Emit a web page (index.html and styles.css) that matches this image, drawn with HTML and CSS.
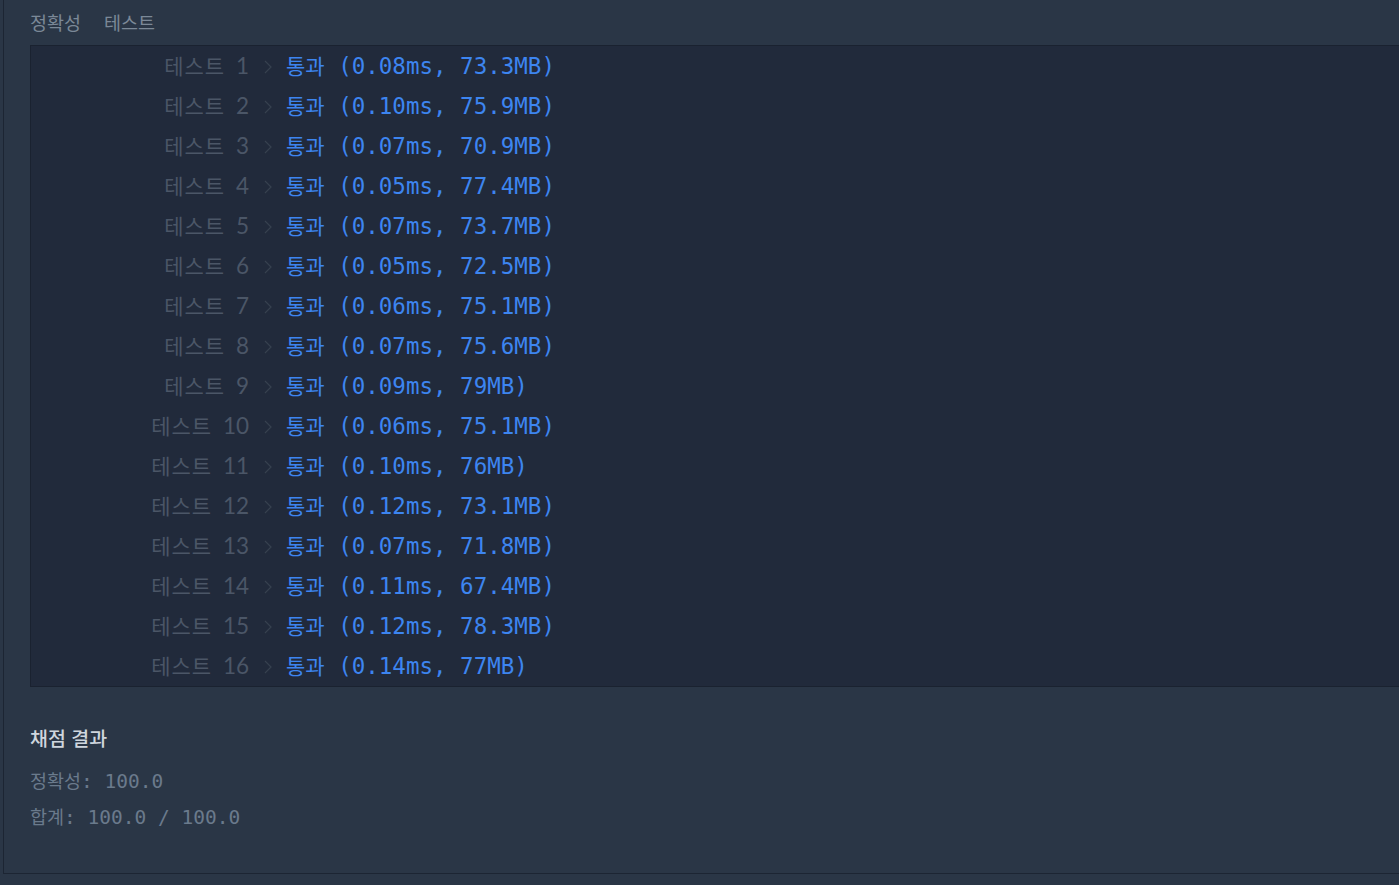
FILE: index.html
```html
<!DOCTYPE html>
<html lang="ko">
<head>
<meta charset="utf-8">
<title>채점 결과</title>
<link rel="stylesheet" href="styles.css">
</head>
<body>
<div class="frame">
  <div class="tabs">
    <span class="tab">정확성</span>
    <span class="tab">테스트</span>
  </div>
  <div class="panel">
    <div class="row"><span class="label"><span class="ko">테스트</span> 1</span><svg class="chev" viewBox="0 0 8 14"><path d="M1 1 L7 7 L1 13"/></svg><span class="result"><span class="ko">통과</span> (0.08ms, 73.3MB)</span></div>
    <div class="row"><span class="label"><span class="ko">테스트</span> 2</span><svg class="chev" viewBox="0 0 8 14"><path d="M1 1 L7 7 L1 13"/></svg><span class="result"><span class="ko">통과</span> (0.10ms, 75.9MB)</span></div>
    <div class="row"><span class="label"><span class="ko">테스트</span> 3</span><svg class="chev" viewBox="0 0 8 14"><path d="M1 1 L7 7 L1 13"/></svg><span class="result"><span class="ko">통과</span> (0.07ms, 70.9MB)</span></div>
    <div class="row"><span class="label"><span class="ko">테스트</span> 4</span><svg class="chev" viewBox="0 0 8 14"><path d="M1 1 L7 7 L1 13"/></svg><span class="result"><span class="ko">통과</span> (0.05ms, 77.4MB)</span></div>
    <div class="row"><span class="label"><span class="ko">테스트</span> 5</span><svg class="chev" viewBox="0 0 8 14"><path d="M1 1 L7 7 L1 13"/></svg><span class="result"><span class="ko">통과</span> (0.07ms, 73.7MB)</span></div>
    <div class="row"><span class="label"><span class="ko">테스트</span> 6</span><svg class="chev" viewBox="0 0 8 14"><path d="M1 1 L7 7 L1 13"/></svg><span class="result"><span class="ko">통과</span> (0.05ms, 72.5MB)</span></div>
    <div class="row"><span class="label"><span class="ko">테스트</span> 7</span><svg class="chev" viewBox="0 0 8 14"><path d="M1 1 L7 7 L1 13"/></svg><span class="result"><span class="ko">통과</span> (0.06ms, 75.1MB)</span></div>
    <div class="row"><span class="label"><span class="ko">테스트</span> 8</span><svg class="chev" viewBox="0 0 8 14"><path d="M1 1 L7 7 L1 13"/></svg><span class="result"><span class="ko">통과</span> (0.07ms, 75.6MB)</span></div>
    <div class="row"><span class="label"><span class="ko">테스트</span> 9</span><svg class="chev" viewBox="0 0 8 14"><path d="M1 1 L7 7 L1 13"/></svg><span class="result"><span class="ko">통과</span> (0.09ms, 79MB)</span></div>
    <div class="row"><span class="label"><span class="ko">테스트</span> 10</span><svg class="chev" viewBox="0 0 8 14"><path d="M1 1 L7 7 L1 13"/></svg><span class="result"><span class="ko">통과</span> (0.06ms, 75.1MB)</span></div>
    <div class="row"><span class="label"><span class="ko">테스트</span> 11</span><svg class="chev" viewBox="0 0 8 14"><path d="M1 1 L7 7 L1 13"/></svg><span class="result"><span class="ko">통과</span> (0.10ms, 76MB)</span></div>
    <div class="row"><span class="label"><span class="ko">테스트</span> 12</span><svg class="chev" viewBox="0 0 8 14"><path d="M1 1 L7 7 L1 13"/></svg><span class="result"><span class="ko">통과</span> (0.12ms, 73.1MB)</span></div>
    <div class="row"><span class="label"><span class="ko">테스트</span> 13</span><svg class="chev" viewBox="0 0 8 14"><path d="M1 1 L7 7 L1 13"/></svg><span class="result"><span class="ko">통과</span> (0.07ms, 71.8MB)</span></div>
    <div class="row"><span class="label"><span class="ko">테스트</span> 14</span><svg class="chev" viewBox="0 0 8 14"><path d="M1 1 L7 7 L1 13"/></svg><span class="result"><span class="ko">통과</span> (0.11ms, 67.4MB)</span></div>
    <div class="row"><span class="label"><span class="ko">테스트</span> 15</span><svg class="chev" viewBox="0 0 8 14"><path d="M1 1 L7 7 L1 13"/></svg><span class="result"><span class="ko">통과</span> (0.12ms, 78.3MB)</span></div>
    <div class="row"><span class="label"><span class="ko">테스트</span> 16</span><svg class="chev" viewBox="0 0 8 14"><path d="M1 1 L7 7 L1 13"/></svg><span class="result"><span class="ko">통과</span> (0.14ms, 77MB)</span></div>
  </div>
  <div class="summary">
    <h4 class="summary-title">채점 결과</h4>
    <p class="summary-line"><span class="ko">정확성</span>: 100.0</p>
    <p class="summary-line"><span class="ko">합계</span>: 100.0 / 100.0</p>
  </div>
</div>
<div class="below"></div>
</body>
</html>
```

FILE: styles.css
```css
html, body {
  margin: 0;
  padding: 0;
  background: #2a3646;
}
body {
  font-family: "Noto Sans", "Noto Sans CJK KR", sans-serif;
  overflow: hidden;
}
.frame {
  margin-left: 3px;
  height: 874px;
  border-left: 1px solid #1c2533;
  border-bottom: 1px solid #1c2533;
  padding-left: 26px;
  box-sizing: border-box;
  overflow: hidden;
}
.tabs {
  height: 45px;
  display: flex;
  gap: 23px;
  align-items: flex-start;
  padding-top: 8px;
  box-sizing: border-box;
}
.tab {
  font-family: "Noto Sans CJK KR", sans-serif;
  font-size: 18.5px;
  line-height: 28px;
  color: #7b8897;
}
.panel {
  background: #212a3b;
  border: 1px solid #1a2230;
  border-right: none;
  margin-right: -10px;
  display: flex;
  flex-direction: column;
}
.row {
  display: flex;
  align-items: center;
  height: 40px;
  margin-top: -1px;
  margin-bottom: 1px;
}
.label {
  width: 218px;
  text-align: right;
  font-family: "Lato", "Noto Sans CJK KR", sans-serif;
  font-size: 22.5px;
  line-height: 40px;
  color: #4b5667;
  white-space: nowrap;
}
.label .ko {
  font-size: 21px;
  letter-spacing: 1px;
  margin-right: 5px;
}
.chev {
  width: 8px;
  height: 14px;
  margin-left: 15px;
  margin-right: 14px;
  margin-top: 4px;
  fill: none;
  stroke: #37414f;
  stroke-width: 1.2;
}
.result {
  font-family: "DejaVu Sans Mono", "Noto Sans CJK KR", monospace;
  font-size: 22.5px;
  line-height: 40px;
  color: #3d85f0;
  white-space: pre;
}
.ko {
  font-family: "Noto Sans CJK KR", sans-serif;
}
.result .ko {
  font-size: 21px;
}
.summary {
  padding-top: 37px;
}
.summary-title {
  margin: 0 0 14px;
  font-family: "Noto Sans CJK KR", sans-serif;
  font-size: 19.5px;
  font-weight: 500;
  line-height: 28px;
  color: #cfd6de;
}
.summary-line {
  margin: 0 0 8px;
  height: 28px;
  font-family: "DejaVu Sans Mono", "Noto Sans CJK KR", monospace;
  font-size: 19.5px;
  line-height: 28px;
  color: #6a7a8c;
  white-space: pre;
}
.summary-line .ko {
  font-size: 18.5px;
}
.below {
  height: 20px;
}
```
